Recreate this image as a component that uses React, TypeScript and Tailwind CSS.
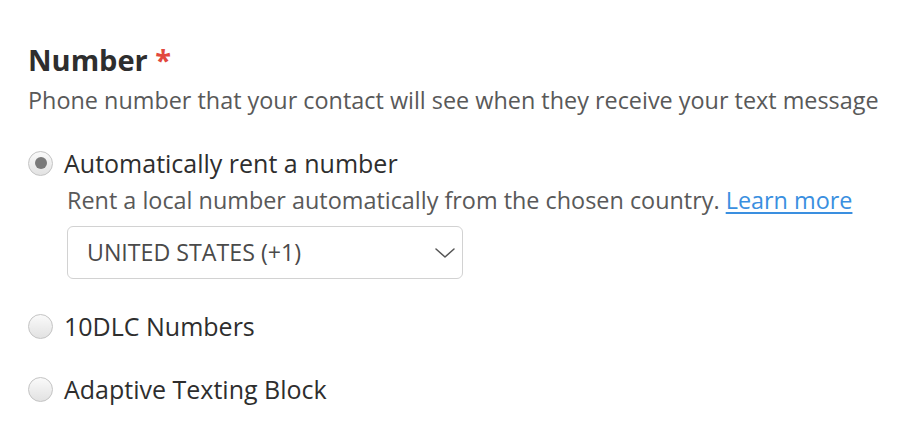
import React from 'react';

const Radio = ({ checked }: { checked?: boolean }) => (
  <span className="flex h-[25px] w-[25px] shrink-0 items-center justify-center rounded-full border border-[#c4c4c4] bg-gradient-to-b from-[#fafafa] to-[#e2e2e2]">
    {checked && <span className="h-[12px] w-[12px] rounded-full bg-[#7a7a7a]" />}
  </span>
);

export default function App() {
  return (
    <div className="h-[436px] w-[922px] bg-white px-[28px] pt-[42px] font-['Open_Sans',sans-serif] text-[#2e2e2e]">
      <h2 className="text-[29px] font-bold leading-[36px]">
        Number <span className="text-[#e2483d]">*</span>
      </h2>
      <p className="mt-[6px] whitespace-nowrap text-[23.4px] leading-[32px] text-[#595959]">
        Phone number that your contact will see when they receive your text message
      </p>

      <div className="mt-[30px] flex items-center gap-[11px]">
        <Radio checked />
        <span className="text-[25px] leading-[34px]">Automatically rent a number</span>
      </div>
      <div className="pl-[39px]">
        <p className="mt-[4px] whitespace-nowrap text-[23.4px] leading-[32px] text-[#595959]">
          Rent a local number automatically from the chosen country.{' '}
          <a href="#" className="text-[#3a8fe0] underline underline-offset-[3px]">Learn more</a>
        </p>
        <div className="mt-[10px] flex h-[53px] w-[396px] items-center justify-between rounded-[6px] border border-[#d2d2d2] pl-[19px] pr-[6px]">
          <span className="text-[23.2px] text-[#4a4a4a]">UNITED STATES (+1)</span>
          <svg width="22" height="12" viewBox="0 0 22 12" fill="none" stroke="#555" strokeWidth="1.5" strokeLinecap="round" strokeLinejoin="round">
            <path d="M2 2l9 8 9-8" />
          </svg>
        </div>
      </div>

      <div className="mt-[30px] flex items-center gap-[11px]">
        <Radio />
        <span className="text-[25px] leading-[34px]">10DLC Numbers</span>
      </div>
      <div className="mt-[29px] flex items-center gap-[11px]">
        <Radio />
        <span className="text-[25px] leading-[34px]">Adaptive Texting Block</span>
      </div>
    </div>
  );
}
